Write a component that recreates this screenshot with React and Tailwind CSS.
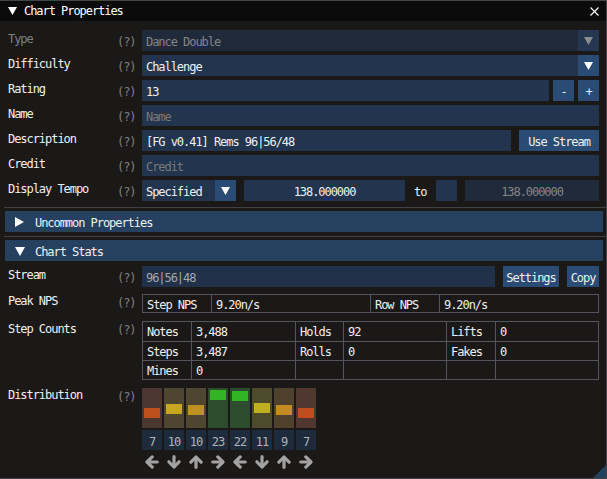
import React from 'react';

function TriDown({ fill = '#ffffff', w = 10, h = 9 }) {
  return (
    <svg width={w} height={h} viewBox={`0 0 ${w} ${h}`} className="block shrink-0">
      <polygon points={`0,0 ${w},0 ${w / 2},${h}`} fill={fill} />
    </svg>
  );
}

function TriRight({ fill = '#ffffff' }) {
  return (
    <svg width="9" height="10" viewBox="0 0 9 10" className="block shrink-0">
      <polygon points="0,0 9,5 0,10" fill={fill} />
    </svg>
  );
}

function Arrow({ dir }) {
  const rot = { left: 0, up: 90, right: 180, down: 270 }[dir];
  return (
    <svg width="14" height="14" viewBox="0 0 14 14" className="block" style={{ transform: `rotate(${rot}deg)` }}>
      <g fill="none" stroke="#a3a3a3" strokeWidth="3.2" strokeLinecap="round" strokeLinejoin="round">
        <path d="M12.3 7 H2.5" />
        <path d="M7.2 1.9 L2 7 L7.2 12.1" />
      </g>
    </svg>
  );
}

function Row({ label, labelClass = 'text-[#f0f0f0] pt-[3px]', helpClass = 'pt-[6px]', children, className = '' }) {
  return (
    <div className={`flex ${className}`}>
      <div className={`w-[109px] shrink-0 leading-[13px] whitespace-nowrap ${labelClass}`}>{label}</div>
      <div className={`w-[25px] shrink-0 leading-[13px] text-[#808080] ${helpClass}`}>(?)</div>
      <div className="flex-1 min-w-0 flex">{children}</div>
    </div>
  );
}

const bars = [
  { n: 7, bg: 'bg-[#4b3630]', mk: 'bg-[#be501e]', top: 'mt-[20px]', dir: 'left' },
  { n: 10, bg: 'bg-[#4e4630]', mk: 'bg-[#c8a523]', top: 'mt-[16px]', dir: 'down' },
  { n: 10, bg: 'bg-[#4e4630]', mk: 'bg-[#be9123]', top: 'mt-[17px]', dir: 'up' },
  { n: 23, bg: 'bg-[#2d4b2d]', mk: 'bg-[#32b423]', top: 'mt-[2px]', dir: 'right' },
  { n: 22, bg: 'bg-[#2d4b2d]', mk: 'bg-[#32b423]', top: 'mt-[3px]', dir: 'left' },
  { n: 11, bg: 'bg-[#4e4b2d]', mk: 'bg-[#beaf23]', top: 'mt-[15px]', dir: 'down' },
  { n: 9, bg: 'bg-[#50412d]', mk: 'bg-[#c38c23]', top: 'mt-[17px]', dir: 'up' },
  { n: 7, bg: 'bg-[#50372f]', mk: 'bg-[#c34b1e]', top: 'mt-[20px]', dir: 'right' },
];

export default function App() {
  return (
    <div className="relative w-[607px] h-[479px] overflow-hidden bg-[#1a1917] border-t border-r border-b border-[#444448] flex flex-col font-['DejaVu_Sans_Mono',monospace] text-[12px] tracking-[-1.05px] text-[#f0f0f0]">
      {/* Title bar */}
      <div className="h-[20px] shrink-0 bg-[#0b0b0b] flex items-center pl-[8px] pr-[7px]">
        <TriDown w={9} h={8} />
        <span className="ml-[7px] leading-[13px] pt-[1px] text-white">Chart Properties</span>
        <svg width="9" height="9" viewBox="0 0 9 9" className="ml-auto block">
          <path d="M0.5 0.5 L8.5 8.5 M8.5 0.5 L0.5 8.5" stroke="#ffffff" strokeWidth="1.1" />
        </svg>
      </div>

      {/* Body */}
      <div className="pl-[8px] pr-[7px] pt-[9px] flex flex-col">
        <div className="flex flex-col gap-[4px]">
          <Row label="Type" labelClass="text-[#808080] pt-[3px]">
            <div className="flex-1 h-[21px] bg-[#1f2a3b] pl-[4px] pt-[6px] leading-[13px] text-[#858585]">Dance Double</div>
            <div className="w-[21px] h-[21px] bg-[#243650] flex items-center justify-center">
              <TriDown fill="#8c8c8c" w={9} h={8} />
            </div>
          </Row>
          <Row label="Difficulty">
            <div className="flex-1 h-[21px] bg-[#22344e] pl-[4px] pt-[6px] leading-[13px]">Challenge</div>
            <div className="w-[21px] h-[21px] bg-[#2a4b73] flex items-center justify-center">
              <TriDown w={9} h={8} />
            </div>
          </Row>
          <Row label="Rating">
            <div className="flex-1 h-[21px] bg-[#22344e] pl-[4px] pt-[6px] leading-[13px]">13</div>
            <div className="ml-[4px] w-[21px] h-[21px] bg-[#2a4b73] pt-[6px] leading-[13px] text-center">-</div>
            <div className="ml-[4px] w-[21px] h-[21px] bg-[#2a4b73] pt-[6px] leading-[13px] text-center">+</div>
          </Row>
          <Row label="Name">
            <div className="flex-1 h-[21px] bg-[#22344e] pl-[4px] pt-[6px] leading-[13px] text-[#7a7a7a]">Name</div>
          </Row>
          <Row label="Description">
            <div className="flex-1 h-[21px] bg-[#22344e] pl-[4px] pt-[6px] leading-[13px] whitespace-nowrap">[FG v0.41] Rems 96|56/48</div>
            <div className="ml-[8px] w-[80px] h-[21px] bg-[#2a4b73] pt-[6px] leading-[13px] text-center">Use Stream</div>
          </Row>
          <Row label="Credit">
            <div className="flex-1 h-[21px] bg-[#22344e] pl-[4px] pt-[6px] leading-[13px] text-[#7a7a7a]">Credit</div>
          </Row>
          <Row label="Display Tempo">
            <div className="w-[94px] h-[21px] bg-[#22344e] flex">
              <div className="flex-1 pl-[4px] pt-[6px] leading-[13px]">Specified</div>
              <div className="w-[21px] h-[21px] bg-[#2a4b73] flex items-center justify-center">
                <TriDown w={9} h={8} />
              </div>
            </div>
            <div className="ml-[8px] w-[161px] h-[21px] bg-[#22344e] pt-[6px] leading-[13px] text-center">138.000000</div>
            <div className="ml-[8px] w-[23px] pt-[6px] leading-[13px] pl-[1px]">to</div>
            <div className="w-[21px] h-[21px] bg-[#22344e]" />
            <div className="ml-[8px] flex-1 h-[21px] bg-[#1f2a3b] pt-[6px] leading-[13px] text-center text-[#858585]">138.000000</div>
          </Row>
        </div>

        {/* Separator */}
        <div className="mt-[6px] h-[1px] bg-[#404046] -ml-[4px] -mr-[7px]" />
        {/* Uncommon Properties header */}
        <div className="mt-[3px] h-[21px] bg-[#26405f] -ml-[3px] -mr-[4px] flex">
          <div className="pl-[10px] pt-[6px]"><TriRight /></div>
          <div className="pl-[11px] pt-[6px] leading-[13px]">Uncommon Properties</div>
        </div>
        <div className="mt-[4px] h-[1px] bg-[#404046] -ml-[4px] -mr-[7px]" />
        {/* Chart Stats header */}
        <div className="mt-[3px] h-[21px] bg-[#26405f] -ml-[3px] -mr-[4px] flex">
          <div className="pl-[10px] pt-[7px]"><TriDown w={10} h={9} /></div>
          <div className="pl-[10px] pt-[6px] leading-[13px]">Chart Stats</div>
        </div>

        {/* Stream */}
        <Row label="Stream" className="mt-[5px]">
          <div className="flex-1 h-[21px] bg-[#21314a] pl-[4px] pt-[6px] leading-[13px] text-[#a8a8a8]">96|56|48</div>
          <div className="ml-[8px] w-[56px] h-[21px] bg-[#2a4b73] pt-[6px] leading-[13px] text-center">Settings</div>
          <div className="ml-[8px] w-[32px] h-[21px] bg-[#2a4b73] pt-[6px] leading-[13px] text-center">Copy</div>
        </Row>

        {/* Peak NPS */}
        <Row label="Peak NPS" labelClass="text-[#f0f0f0] pt-[1px]" helpClass="pt-[3px]" className="mt-[7px]">
          <div className="flex-1 border border-[#55555d] flex h-[19px]">
            <div className="w-[68px] pl-[4px] pt-[4px] leading-[13px]">Step NPS</div>
            <div className="w-[159px] border-l border-[#55555d] pl-[4px] pt-[4px] leading-[13px]">9.20n/s</div>
            <div className="w-[69px] border-l border-[#55555d] pl-[4px] pt-[4px] leading-[13px]">Row NPS</div>
            <div className="flex-1 border-l border-[#55555d] pl-[4px] pt-[4px] leading-[13px]">9.20n/s</div>
          </div>
        </Row>

        {/* Step Counts */}
        <Row label="Step Counts" labelClass="text-[#f0f0f0] pt-[2px]" helpClass="pt-[3px]" className="mt-[8px]">
          <div className="flex-1 border border-[#55555d] flex flex-col">
            {[
              ['Notes', '3,488', 'Holds', '92', 'Lifts', '0'],
              ['Steps', '3,487', 'Rolls', '0', 'Fakes', '0'],
              ['Mines', '0', '', '', '', ''],
            ].map((r, i) => (
              <div key={i} className={`flex h-[19px] ${i > 0 ? 'border-t border-[#55555d]' : ''}`}>
                <div className="w-[48px] pl-[4px] pt-[4px] leading-[13px]">{r[0]}</div>
                <div className="w-[104px] border-l border-[#55555d] pl-[4px] pt-[4px] leading-[13px]">{r[1]}</div>
                <div className="w-[48px] border-l border-[#55555d] pl-[4px] pt-[4px] leading-[13px]">{r[2]}</div>
                <div className="w-[103px] border-l border-[#55555d] pl-[4px] pt-[4px] leading-[13px]">{r[3]}</div>
                <div className="w-[49px] border-l border-[#55555d] pl-[4px] pt-[4px] leading-[13px]">{r[4]}</div>
                <div className="flex-1 border-l border-[#55555d] pl-[4px] pt-[4px] leading-[13px]">{r[5]}</div>
              </div>
            ))}
          </div>
        </Row>

        {/* Distribution */}
        <Row label="Distribution" labelClass="text-[#f0f0f0] pt-[1px]" helpClass="pt-[3px]" className="mt-[8px]">
          <div className="flex gap-[2px]">
            {bars.map((b, i) => (
              <div key={i} className="w-[20px] flex flex-col items-center">
                <div className={`w-[20px] h-[40px] ${b.bg} pt-[0px]`}>
                  <div className={`${b.top} mx-[2px] h-[10px] ${b.mk}`} />
                </div>
                <div className="mt-[2px] w-[20px] h-[20px] bg-[#1e2b3d] pt-[6px] leading-[13px] text-center text-[#b4b4b4]">{b.n}</div>
                <div className="mt-[5px]"><Arrow dir={b.dir} /></div>
              </div>
            ))}
          </div>
        </Row>
      </div>

      {/* resize grip */}
      <svg width="13" height="13" viewBox="0 0 13 13" className="absolute right-0 bottom-0 block">
        <polygon points="13,0 13,13 0,13" fill="#253f5f" />
      </svg>
    </div>
  );
}
